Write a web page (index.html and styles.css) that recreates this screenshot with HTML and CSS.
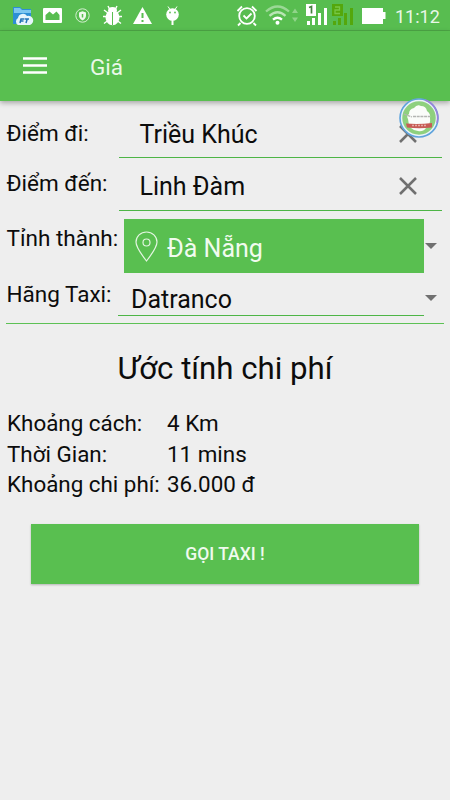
FILE: index.html
```html
<!DOCTYPE html>
<html lang="vi">
  <head>
    <meta charset="UTF-8" />
    <meta name="viewport" content="width=device-width, initial-scale=1.0" />
    <title>Giá</title>
    <link rel="stylesheet" href="styles.css">
  </head>
  <body>
    <!-- Status bar -->
    <div class="status-bar">
      <svg class="status-icons" width="190" height="31" viewBox="0 0 190 31">
        <!-- file explorer -->
        <path d="M13 7h7l2 2h9v15H13z" fill="#2d8fd5" />
        <path d="M14 8h6l2 2h9v3H14z" fill="#7cc6f0" />
        <path d="M18 25a4 4 0 0 1 0-7a5 5 0 0 1 9-2a4.600 4.600 0 0 1 3 9z" fill="#e6f5fc" />
        <path d="M20 23l1-4h3.500M20.500 21h3M26 23l1.200-4M25 19h4" stroke="#2474b8" stroke-width="1.500" fill="none" />
        <!-- picture -->
        <path fill="#fff" fill-rule="evenodd" d="M44 8h17q1 0 1 1v13q0 1-1 1H44q-1 0-1-1V9q0-1 1-1zM45.500 20h14v-5l-3-3.500-3.500 3-3.500-3-4 3.500z" />
        <!-- shield -->
        <circle cx="82.500" cy="15.500" r="6.700" fill="none" stroke="#d5efd1" stroke-width="1" />
        <path d="M79 12.500l3.500-1.300 3.500 1.300v3q0 3-3.500 5q-3.500-2-3.500-5z" fill="#eef9ec" />
        <path d="M82.500 14v3.500" stroke="#59bf50" stroke-width="1.500" />
        <!-- bug -->
        <g stroke="#fff" stroke-width="1.400" fill="none">
          <path d="M108 6l2 4M117 6l-2 4M104 10l4 3M121 10l-4 3M103 16.500h19M104 23.500l4-3M121 23.500l-4-3" />
        </g>
        <path d="M108 11q0-4 4.500-4t4.500 4z" fill="#fff" />
        <ellipse cx="112.500" cy="17.500" rx="7" ry="7.700" fill="#fff" />
        <path d="M112.500 12v13" stroke="#59bf50" stroke-width="1" />
        <!-- warning -->
        <path d="M142.500 7l9.500 17h-19z" fill="#fff" />
        <path d="M142.500 13v5M142.500 20v2" stroke="#59bf50" stroke-width="2" />
        <!-- android -->
        <path d="M168 6.500l2 3M177 6.500l-2 3" stroke="#fff" stroke-width="1" />
        <circle cx="172.500" cy="14.500" r="6.300" fill="#fff" />
        <circle cx="170" cy="12.500" r=".9" fill="#59bf50" />
        <circle cx="175" cy="12.500" r=".9" fill="#59bf50" />
        <path d="M172.500 20v5" stroke="#fff" stroke-width="2" />
      </svg>
      <svg class="status-icons" width="155" height="31" viewBox="235 0 155 31">
        <!-- alarm -->
        <g fill="none" stroke="#fff" stroke-width="1.800">
          <circle cx="247" cy="16" r="7.800" />
          <path d="M237.500 11l4.500-4.500M256.500 11l-4.500-4.500M240.500 23l-2.500 2.500M253.500 23l2.500 2.500M243.500 15.500l3 3 5-5" />
        </g>
        <!-- wifi -->
        <g fill="none" stroke-width="2.300">
          <path d="M266 11.500q11.500-10 23 0" stroke="#9bd896" />
          <path d="M269.500 15.800q8-7 16 0" stroke="#b9e5b5" />
          <path d="M273 19.700q4.500-3.800 9 0" stroke="#fff" />
        </g>
        <circle cx="277.500" cy="22.800" r="2" fill="#fff" />
        <path d="M292 13l3-4.500 3 4.500zM292 17.500h6l-3 4.500z" fill="#91d48a" />
        <!-- sim 1 -->
        <path fill="#fff" d="M306 4h10v12h-10zM307 21h3v4h-3zM312 18h3v7h-3zM318 13h3v12h-3zM324 8h3v17h-3z" />
        <path d="M309 7.500l2.500-1v7" fill="none" stroke="#44803e" stroke-width="1.700" />
        <!-- sim 2 -->
        <path fill="#54a70c" d="M332 4h11v12h-11zM333 21h3v4h-3zM338 18h3v7h-3zM344 13h3v12h-3zM350 8h3v17h-3z" />
        <path d="M335 7h4.500v3H335v3.500h5" fill="none" stroke="#77c744" stroke-width="1.300" />
        <!-- battery -->
        <path fill="#fff" d="M362 8h21v4h2.500v7H383v5h-21z" />
      </svg>
      <span class="clock">11:12</span>
    </div>

    <!-- App bar -->
    <div class="app-bar">
      <svg width="24" height="18" viewBox="0 0 24 18">
        <path d="M0 1.500h24M0 8.500h24M0 15.500h24" stroke="#fff" stroke-width="2.400" />
      </svg>
      <span class="app-title">Giá</span>
      <svg class="bubble" width="42" height="42" viewBox="0 0 42 42">
        <circle cx="21" cy="21" r="18" fill="#8ed07e" stroke="#eaf2fa" stroke-width="2.500" />
        <circle cx="21" cy="21" r="19" fill="none" stroke="#5fa3dc" stroke-width="1.600" />
        <path d="M27 3a19 19 0 0 1 12 23" fill="none" stroke="#9a82d8" stroke-width="1.600" />
        <path d="M13 31q-3-4-3-9q-2-3 1-5q0-5 5-6q3-4 7-2q5 0 6 5q4 3 3 7q1 6-4 10q-3 4-8 3q-4 0-7-3z" fill="#fafcf9" />
        <path d="M6 17l8 3M15 19.500h17" stroke="#b3b5b2" stroke-width="1.300" stroke-dasharray="3 .7" />
        <path d="M8 26.500q13 1 26-.5v4.500q-13 1.500-25 0z" fill="#c65c55" />
        <path d="M14 28.500h14" stroke="#e5aaa5" stroke-width="1.600" stroke-dasharray="2 1" />
      </svg>
    </div>

    <!-- Trip form -->
    <div class="form">
      <div class="row row-from">
        <span class="label">Điểm đi:</span>
        <div class="field">
          <span>Triều Khúc</span>
          <svg class="clear" width="18" height="18" viewBox="0 0 18 18">
            <path d="M1 1l16 16M17 1L1 17" />
          </svg>
        </div>
      </div>
      <div class="row row-to">
        <span class="label">Điểm đến:</span>
        <div class="field">
          <span>Linh Đàm</span>
          <svg class="clear" width="18" height="18" viewBox="0 0 18 18">
            <path d="M1 1l16 16M17 1L1 17" />
          </svg>
        </div>
      </div>
      <div class="row row-city">
        <span class="label">Tỉnh thành:</span>
        <div class="city">
          <svg width="23" height="31" viewBox="0 0 23 31">
            <path d="M11.500 30Q1 16.500 1 11a10.500 10 0 0 1 21 0Q22 16.500 11.500 30z" />
            <circle cx="11.500" cy="11.500" r="3.500" />
          </svg>
          <span>Đà Nẵng</span>
        </div>
        <span class="arrow"></span>
      </div>
      <div class="row row-taxi">
        <span class="label">Hãng Taxi:</span>
        <div class="select">Datranco</div>
        <span class="arrow"></span>
      </div>
    </div>

    <!-- Estimate -->
    <h1 class="title">Ước tính chi phí</h1>
    <div class="info">
      <span>Khoảng cách:</span><span>4 Km</span>
      <span>Thời Gian:</span><span>11 mins</span>
      <span>Khoảng chi phí:</span><span>36.000 đ</span>
    </div>
    <button class="call">GỌI TAXI !</button>
  </body>
</html>
```

FILE: styles.css
```css
* {
  box-sizing: border-box;
}
body {
  margin: 0;
  height: 800px;
  overflow: hidden;
  background-color: #eee;
  color: #0c0c0c;
  font-family: Roboto, sans-serif;
  font-size: 22.5px;
}
.status-bar {
  display: flex;
  height: 31px;
  background-color: #58bd50;
  border-bottom: 1px solid #4da746;
}
.status-icons {
  flex: none;
}
.status-icons + .status-icons {
  margin-left: 45px;
}
.clock {
  margin-left: 5px;
  color: #e9f7e7;
  font-size: 18px;
  line-height: 33px;
  white-space: nowrap;
}
.app-bar {
  position: relative;
  display: flex;
  align-items: center;
  height: 70px;
  padding-left: 23px;
  background-color: #59bf50;
  box-shadow: 0 2px 5px rgba(0, 0, 0, 0.3);
}
.app-title {
  margin: 1px 0 0 43px;
  color: #eaf8e8;
  font-size: 22.5px;
}
.bubble {
  position: absolute;
  top: 66px;
  right: 10px;
  z-index: 2;
}
.form {
  margin: 0 6px;
  height: 223px;
  border-bottom: 1px solid #5cc154;
}
.row {
  display: flex;
}
.label {
  flex: none;
  width: 113px;
  padding-left: 0.5px;
  line-height: 26px;
  white-space: nowrap;
}
.field {
  display: flex;
  align-items: center;
  justify-content: space-between;
  width: 323px;
  padding: 0 25px 0 20.5px;
  border-bottom: 1px solid #4db546;
  font-size: 25px;
  line-height: 30px;
}
.clear {
  fill: none;
  stroke: #707070;
  stroke-width: 2.5;
}
.row-from {
  height: 57px;
}
.row-from .label {
  padding-top: 19px;
}
.row-from .field {
  padding-top: 12px;
}
.row-from .clear {
  margin-bottom: 3px;
}
.row-to {
  height: 53px;
}
.row-to .label {
  padding-top: 12px;
}
.row-to .field {
  padding-top: 6px;
}
.row-to .clear {
  margin-bottom: 3px;
}
.row-city {
  height: 62px;
  padding-top: 8px;
}
.row-city .label {
  width: 118px;
  padding-top: 6px;
}
.city {
  display: flex;
  align-items: center;
  gap: 9px;
  width: 300px;
  height: 54px;
  padding-left: 11px;
  background-color: #59bf50;
  color: #f1fbef;
  font-size: 25px;
}
.city svg {
  fill: none;
  stroke: #e3f5e1;
  stroke-width: 1.2;
}
.city span {
  padding-top: 4px;
}
.arrow {
  align-self: center;
  margin-left: 1px;
  border: 6.5px solid transparent;
  border-top-color: #707070;
  border-bottom: none;
}
.row-taxi {
  height: 43px;
}
.row-taxi .label {
  width: 112px;
  padding-top: 8px;
}
.select {
  width: 306px;
  padding: 12px 0 0 13px;
  border-bottom: 1px solid #4db546;
  font-size: 25px;
  line-height: 30px;
}
.row-taxi .arrow {
  margin-top: 7px;
}
.title {
  margin: 27px 0 0;
  font-size: 31.2px;
  font-weight: 400;
  line-height: 36px;
  text-align: center;
}
.info {
  display: grid;
  grid-template-columns: 160px auto;
  margin: 21px 7px 0;
  font-size: 22.4px;
  line-height: 30.7px;
  white-space: nowrap;
}
.call {
  display: block;
  width: 388px;
  height: 60px;
  margin: 24px auto 0;
  border: none;
  background-color: #59bf50;
  box-shadow: 0 1px 2px rgba(0, 0, 0, 0.25);
  color: #effaee;
  font-family: inherit;
  font-size: 17.5px;
  font-weight: 500;
}
```
